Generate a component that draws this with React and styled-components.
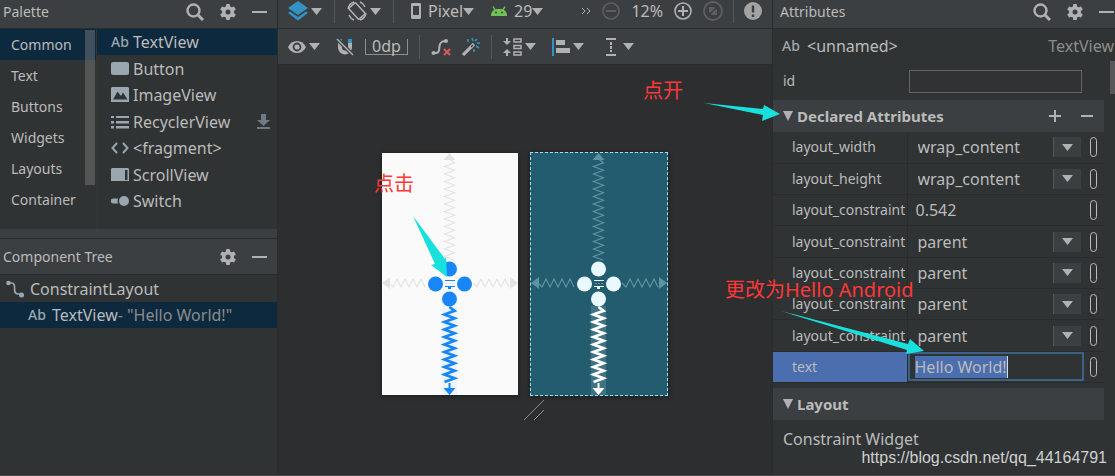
import { useState } from "react";
import styled, { createGlobalStyle, css } from "styled-components";

const v = {
  bg: "#303334",
  bar: "#3c3f41",
  canvas: "#2d2e30",
  line: "#292b2c",
  selected: "#0d293e",
  text: "#bbbbbb",
  icon: "#afb1b3",
  steel: "#9aa7b0",
  off: "#5c5e60",
  blue: "#3592c4",
  note: "#ff3838",
  arrow: "#18e0dc",
};

const categories = ["Common", "Text", "Buttons", "Widgets", "Layouts", "Container"];

const widgets = [
  { name: "TextView", icon: "ab" },
  { name: "Button", icon: "button" },
  { name: "ImageView", icon: "image" },
  { name: "RecyclerView", icon: "list", download: true },
  { name: "<fragment>", icon: "code" },
  { name: "ScrollView", icon: "scroll" },
  { name: "Switch", icon: "switch" },
];

const attributes = [
  { name: "layout_width", value: "wrap_content", options: ["wrap_content", "match_parent"] },
  { name: "layout_height", value: "wrap_content", options: ["wrap_content", "match_parent"] },
  { name: "layout_constraint", value: "0.542" },
  { name: "layout_constraint", value: "parent", options: ["parent"] },
  { name: "layout_constraint", value: "parent", options: ["parent"] },
  { name: "layout_constraint", value: "parent", options: ["parent"] },
  { name: "layout_constraint", value: "parent", options: ["parent"] },
];

// icons

const SearchIcon = () => (
  <svg width="18" height="18" viewBox="0 0 18 18" fill="none" stroke={v.icon}>
    <circle cx="7.5" cy="7.5" r="6" strokeWidth="2.4" />
    <path d="M12 12l5 5" strokeWidth="3" />
  </svg>
);

const GearIcon = () => (
  <svg width="16" height="16" viewBox="0 0 16 16" fill={v.icon}>
    {[0, 60, 120].map((a) => (
      <rect key={a} x="6" y="0" width="4" height="16" rx="1" transform={`rotate(${a} 8 8)`} />
    ))}
    <circle cx="8" cy="8" r="6" />
    <circle cx="8" cy="8" r="2.5" fill={v.bar} />
  </svg>
);

const MinusIcon = () => (
  <svg width="16" height="16" viewBox="0 0 16 16">
    <path d="M0 8h15" stroke={v.icon} strokeWidth="2" />
  </svg>
);

const Caret = () => (
  <svg width="11" height="7" viewBox="0 0 11 7">
    <path d="M0 0h11L5.5 7z" fill={v.icon} />
  </svg>
);

const WidgetIcon = ({ name }) => (
  <svg width="18" height="16" viewBox="0 0 18 16" fill={v.steel}>
    {name === "button" && <rect y="1" width="18" height="13" rx="2" />}
    {name === "image" && (
      <path fillRule="evenodd" d="M1 0h16l1 1v14H0V1zM2 12.500h14.500l-4.500-7-2 3.500-3.500-4.500z" />
    )}
    {name === "list" && (
      <path d="M0 2h3v2H0zM5 2h13v2H5zM0 7h3v2.500H0zM5 7h13v2.500H5zM0 12h3v2.500H0zM5 12h13v2.500H5z" />
    )}
    {name === "code" && (
      <path d="M6 3L1.500 8 6 13M12 3l4.500 5-4.500 5" fill="none" stroke={v.steel} strokeWidth="2" />
    )}
    {name === "scroll" && (
      <path fillRule="evenodd" d="M1 1h16l1 1v12H0V2zM14 3v10h2.500V3z" />
    )}
    {name === "switch" && (
      <>
        <path d="M2 5.500h5a7 7 0 000 5H2l-2-1v-3z" />
        <circle cx="13" cy="8" r="5" />
      </>
    )}
  </svg>
);

const DownloadIcon = () => (
  <svg width="13" height="16" viewBox="0 0 13 16" fill="#6e7a84">
    <path d="M4 0h5v6h4L6.500 12 0 6h4zM0 13h13v2H0z" />
  </svg>
);

const ConstraintIcon = () => (
  <svg width="18" height="18" viewBox="0 0 18 18" fill="none" stroke={v.steel} strokeWidth="1.600">
    <path d="M3 3h2.500c3 0 3 2 3 5s0 6 3.500 6h4" />
    <circle cx="2.500" cy="3" r="2.300" fill={v.steel} stroke="none" />
    <circle cx="15.500" cy="15" r="2.500" fill={v.steel} stroke="none" />
  </svg>
);

const LayersIcon = () => (
  <svg width="20" height="20" viewBox="0 0 20 20">
    <path d="M10 0l10 7-10 7L0 7z" fill={v.blue} />
    <path d="M0 12l2-1.500 8 5.500 8-5.500 2 1.500-10 7.500z" fill={v.blue} />
  </svg>
);

const RotateIcon = () => (
  <svg width="20" height="20" viewBox="0 0 20 20" fill="none" stroke={v.icon} strokeWidth="1.500">
    <rect x="5.500" y="2.500" width="9" height="15" rx="1" transform="rotate(-42 10 10)" />
    <path d="M1 8a9 9 0 016-7M13 1a9 9 0 015 5M19 12a9 9 0 01-6 7M7 19a9 9 0 01-5-5" />
  </svg>
);

const PhoneIcon = () => (
  <svg width="10" height="16" viewBox="0 0 10 16">
    <path fillRule="evenodd" fill={v.icon} d="M1 0h8l1 1v14l-1 1H1l-1-1V1zM2 3v9h6V3z" />
  </svg>
);

const AndroidIcon = () => (
  <svg width="16" height="10" viewBox="0 0 16 10">
    <path d="M0 10c0-4 2-6 5-7h6c3 1 5 3 5 7z" fill="#70c255" />
    <path d="M4 4L2 .5M12 4L14 .5" stroke="#70c255" strokeWidth="1.500" />
    <circle cx="5" cy="6.500" r="1" fill={v.bar} />
    <circle cx="11" cy="6.500" r="1" fill={v.bar} />
  </svg>
);

const ChevronsIcon = () => (
  <svg width="10" height="8" viewBox="0 0 10 8" fill="none" stroke={v.icon}>
    <path d="M1 1l3 3-3 3M6 1l3 3-3 3" />
  </svg>
);

const ZoomIcon = ({ kind }) => {
  const color = kind === "in" ? v.icon : v.off;
  return (
    <svg width="20" height="20" viewBox="0 0 20 20" fill="none" stroke={color} strokeWidth="2">
      <circle cx="10" cy="10" r={kind === "fit" ? 9 : 8} strokeWidth={kind === "fit" ? 2 : 1.6} />
      {kind !== "fit" && <path d="M5 10h10" />}
      {kind === "in" && <path d="M10 5v10" />}
      {kind === "fit" && <path d="M6 6h5l3 3v5H9l-3-3zM8 7l5 6" fill={color} stroke="none" />}
      {kind === "fit" && <path d="M6 14l8-8" stroke={v.bar} strokeWidth="1.200" />}
    </svg>
  );
};

const WarnIcon = () => (
  <svg width="18" height="18" viewBox="0 0 18 18">
    <circle cx="9" cy="9" r="9" fill="#a3a3a3" />
    <path d="M9 3.500v7M9 12.500v2.500" stroke={v.bar} strokeWidth="2.400" />
  </svg>
);

const EyeIcon = () => (
  <svg width="18" height="14" viewBox="0 0 18 14">
    <path d="M0 7c2-4 5-6 9-6s7 2 9 6c-2 4-5 6-9 6s-7-2-9-6z" fill={v.icon} />
    <circle cx="9" cy="7" r="3.500" fill="none" stroke={v.bar} strokeWidth="1.800" />
  </svg>
);

const MagnetIcon = () => (
  <svg width="18" height="18" viewBox="0 0 18 18" fill="none" strokeWidth="4">
    <path d="M4 5v4.500a5 5 0 0010 0V5" stroke={v.icon} />
    <path d="M4 1v4M14 1v4" stroke={v.blue} />
    <path d="M0 0l18 18" stroke={v.bar} strokeWidth="4" />
    <path d="M1 1l16 16" stroke={v.icon} strokeWidth="1.500" />
  </svg>
);

const ClearIcon = () => (
  <svg width="20" height="18" viewBox="0 0 20 18" fill="none" strokeWidth="2">
    <path d="M2 15h3c4 0 3-4 3.500-7S10 3 15 3" stroke={v.icon} />
    <circle cx="2.500" cy="15" r="2" fill={v.icon} />
    <circle cx="15" cy="3" r="2" fill={v.icon} />
    <path d="M13 11l6 6M19 11l-6 6" stroke="#db5860" />
  </svg>
);

const WandIcon = () => (
  <svg width="18" height="18" viewBox="0 0 18 18" fill="none">
    <path d="M1 17L12 6" stroke={v.icon} strokeWidth="3.200" />
    <path d="M9 9l2-2" stroke={v.bar} strokeWidth="1.200" />
    <path
      d="M6 1v3M10 0l1 3M15 1l-2 2M15 5h3M14 8l3 2M12 11v3"
      stroke={v.blue}
      strokeWidth="1.600"
    />
  </svg>
);

const PackIcon = () => (
  <svg width="19" height="18" viewBox="0 0 19 18" fill="none" stroke={v.icon}>
    <path d="M4 0v4M4 18v-4" strokeWidth="2" />
    <path d="M0 3h8l-4 4zM0 15h8l-4-4z" fill={v.icon} stroke="none" />
    <path d="M11 1h7v3h-7zM11 7.500h7v3h-7zM11 14h7v3h-7z" strokeWidth="1.500" />
  </svg>
);

const AlignIcon = () => (
  <svg width="18" height="18" viewBox="0 0 18 18" fill={v.icon}>
    <path d="M0 0h2v18H0z" fill={v.blue} />
    <path d="M4 2h9v5H4zM4 10h14v5H4z" />
  </svg>
);

const GuideIcon = () => (
  <svg width="20" height="18" viewBox="-6 0 20 18" stroke={v.icon} strokeWidth="2">
    <path d="M0 1h10M0 17h10" />
    <path d="M5 4v10" strokeDasharray="3 1" />
  </svg>
);

// zig-zag that runs down (or right) from a start point
const spring = (x, y, length, step, amp, vertical) => {
  const pts = [`${x},${y}`];
  for (let i = 1; i * step <= length; i++) {
    const side = i % 2 ? amp : -amp;
    pts.push(vertical ? `${x + side},${y + i * step}` : `${x + i * step},${y + side}`);
  }
  return pts.join(" ");
};

const Springs = ({ muted, strong, active, glow }) => (
  <svg width="136" height="242" viewBox="0 0 136 242" fill="none">
    <rect x="60" y="153" width="15" height="89" fill={glow} />
    <g stroke={muted} strokeWidth="1.200">
      <polyline points={spring(67.5, 6, 102, 3.75, 5, true)} />
      <polyline points={spring(7, 130, 38, 4, 4, false)} />
      <polyline points={spring(91, 130, 38, 4, 4, false)} />
    </g>
    <path d="M67.500 0l6 7h-12zM0 130l8-6v12zM136 130l-8-6v12z" fill={muted} />
    <polyline points={spring(67.5, 154, 76, 3.75, 5, true)} stroke={active} strokeWidth="2.800" />
    <path d="M67.500 242l-6-7h5v-5h2v5h5z" fill={active} />
    <g fill={strong}>
      <circle cx="67.500" cy="116" r="7.500" />
      <circle cx="53.500" cy="131" r="7.500" />
      <circle cx="82.500" cy="131" r="7.500" />
      <circle cx="67.500" cy="146" r="7.500" />
      <path d="M63 127h10v1H63zM63 133h10v1h-4v2h-3v-2h-3z" />
    </g>
    <path d="M64 130.500h8" stroke={muted} strokeDasharray="2 1" />
  </svg>
);

const Ab = () => <AbMark aria-hidden="true">Ab</AbMark>;

export default function App() {
  const [category, setCategory] = useState("Common");
  const [widget, setWidget] = useState("TextView");
  const [text, setText] = useState("Hello World!");

  return (
    <>
      <GlobalStyle />
      <Page>
        <Sidebar>
          <PanelHeader>
            <h2>Palette</h2>
            <IconButton aria-label="Search palette"><SearchIcon /></IconButton>
            <IconButton aria-label="Palette settings"><GearIcon /></IconButton>
            <IconButton aria-label="Hide palette"><MinusIcon /></IconButton>
          </PanelHeader>
          <Palette>
            <Categories>
              {categories.map((name) => (
                <Category key={name} $active={name === category} onClick={() => setCategory(name)}>
                  {name}
                </Category>
              ))}
              <Thumb />
            </Categories>
            <WidgetList>
              {widgets.map((w) => (
                <WidgetRow key={w.name} $active={w.name === widget} onClick={() => setWidget(w.name)}>
                  {w.icon === "ab" ? <Ab /> : <WidgetIcon name={w.icon} />}
                  <span>{w.name}</span>
                  {w.download && <DownloadIcon />}
                </WidgetRow>
              ))}
            </WidgetList>
          </Palette>
          <Splitter />
          <PanelHeader $tall>
            <h2>Component Tree</h2>
            <IconButton aria-label="Tree settings"><GearIcon /></IconButton>
            <IconButton aria-label="Hide tree"><MinusIcon /></IconButton>
          </PanelHeader>
          <TreeRow>
            <ConstraintIcon />
            <span>ConstraintLayout</span>
          </TreeRow>
          <TreeRow $child>
            <Ab />
            <span>TextView<em>- "Hello World!"</em></span>
          </TreeRow>
        </Sidebar>

        <Editor>
          <Toolbar>
            <ToolButton aria-label="Design surface"><LayersIcon /><Caret /></ToolButton>
            <Separator />
            <ToolButton aria-label="Orientation"><RotateIcon /><Caret /></ToolButton>
            <Separator />
            <ToolButton $device><PhoneIcon /><span>Pixel</span><Caret /></ToolButton>
            <ToolButton $device><AndroidIcon /><span>29</span><Caret /></ToolButton>
            <ZoomGroup>
              <ToolButton aria-label="More"><ChevronsIcon /></ToolButton>
              <ToolButton aria-label="Zoom out"><ZoomIcon kind="out" /></ToolButton>
              <span>12%</span>
              <ToolButton aria-label="Zoom in"><ZoomIcon kind="in" /></ToolButton>
              <ToolButton aria-label="Zoom to fit"><ZoomIcon kind="fit" /></ToolButton>
              <Separator />
              <ToolButton aria-label="Issues"><WarnIcon /></ToolButton>
            </ZoomGroup>
          </Toolbar>
          <Toolbar $second>
            <ToolButton $menu aria-label="View options"><EyeIcon /><Caret /></ToolButton>
            <ToolButton aria-label="Autoconnect"><MagnetIcon /></ToolButton>
            <Margin>0dp</Margin>
            <Separator />
            <ToolButton aria-label="Clear constraints"><ClearIcon /></ToolButton>
            <ToolButton aria-label="Infer constraints"><WandIcon /></ToolButton>
            <Separator />
            <ToolButton $menu aria-label="Pack"><PackIcon /><Caret /></ToolButton>
            <ToolButton $menu aria-label="Align"><AlignIcon /><Caret /></ToolButton>
            <ToolButton $menu aria-label="Guidelines"><GuideIcon /><Caret /></ToolButton>
          </Toolbar>
          <Canvas>
            <Screens>
              <Screen>
                <Springs muted="#e3e3e3" strong="#1886f7" active="#1886f7" glow="#edf4fb" />
                <ClickNote>
                  点击
                  <svg width="40" height="64" viewBox="0 0 40 64">
                    <path d="M1 1l32 43 1-2 1 20-16-12 4-1z" fill={v.arrow} />
                  </svg>
                </ClickNote>
              </Screen>
              <Screen $blueprint>
                <Springs muted="#5f93a2" strong="#e9f9ff" active="#ffffff" glow="#3f7282" />
              </Screen>
            </Screens>
            <svg width="22" height="22" viewBox="0 0 22 22" stroke="#8b8b8b">
              <path d="M1 21L21 1M11 21l10-10" />
            </svg>
          </Canvas>
        </Editor>

        <Inspector>
          <PanelHeader>
            <h2>Attributes</h2>
            <IconButton aria-label="Search attributes"><SearchIcon /></IconButton>
            <IconButton aria-label="Attribute settings"><GearIcon /></IconButton>
            <IconButton aria-label="Hide attributes"><MinusIcon /></IconButton>
          </PanelHeader>
          <Identity>
            <Ab />
            <span>&lt;unnamed&gt;</span>
            <em>TextView</em>
          </Identity>
          <Scroller>
            <IdRow>
              <label htmlFor="id">id</label>
              <input id="id" type="text" />
            </IdRow>
            <SectionHeader>
              <SectionToggle><Triangle />Declared Attributes</SectionToggle>
              <IconButton aria-label="Add attribute">
                <svg width="12" height="12" viewBox="0 0 12 12">
                  <path d="M0 6h12M6 0v12" stroke={v.icon} strokeWidth="2" />
                </svg>
              </IconButton>
              <IconButton aria-label="Remove attribute">
                <svg width="12" height="12" viewBox="0 0 12 12">
                  <path d="M0 6h12" stroke={v.icon} strokeWidth="2" />
                </svg>
              </IconButton>
            </SectionHeader>
            <AttributeTable>
              <tbody>
                {attributes.map((a, i) => (
                  <tr key={i}>
                    <th scope="row"><label htmlFor={`attr${i}`}>{a.name}</label></th>
                    <td>
                      {a.options ? (
                        <Dropdown>
                          <select id={`attr${i}`} defaultValue={a.value}>
                            {a.options.map((o) => <option key={o}>{o}</option>)}
                          </select>
                          <ArrowBox><Caret /></ArrowBox>
                        </Dropdown>
                      ) : (
                        <ValueInput id={`attr${i}`} defaultValue={a.value} />
                      )}
                    </td>
                    <td><Pill aria-label={`Pick ${a.name}`} /></td>
                  </tr>
                ))}
                <SelectedRow>
                  <th scope="row"><label htmlFor="attrText">text</label></th>
                  <td>
                    <TextEdit>
                      <input
                        id="attrText"
                        size={text.length}
                        value={text}
                        onChange={(e) => setText(e.target.value)}
                      />
                    </TextEdit>
                  </td>
                  <td><Pill aria-label="Pick text" /></td>
                </SelectedRow>
              </tbody>
            </AttributeTable>
            <SectionHeader>
              <SectionToggle><Triangle />Layout</SectionToggle>
            </SectionHeader>
            <Constraint>Constraint Widget</Constraint>
          </Scroller>
          <ScrollThumb />
          <OpenNote>
            点开
            <svg width="78" height="20" viewBox="0 0 78 20">
              <path d="M1 1l59 6 1-4 16 9-18 7 1-6z" fill={v.arrow} />
            </svg>
          </OpenNote>
          <ChangeNote>
            更改为Hello Android
            <svg width="146" height="48" viewBox="0 0 146 48">
              <path d="M1 1l127 33 2-5 14 12-18 3 1-4z" fill={v.arrow} />
            </svg>
          </ChangeNote>
          <Watermark href="https://blog.csdn.net/qq_44164791">
            https://blog.csdn.net/qq_44164791
          </Watermark>
        </Inspector>
      </Page>
    </>
  );
}

const GlobalStyle = createGlobalStyle`
  * {
    box-sizing: border-box;
  }
  body {
    margin: 0;
    background: ${v.bg};
    color: ${v.text};
    font: 16px/20px "Noto Sans", "Noto Sans CJK SC", sans-serif;
  }
  button, input, select {
    margin: 0;
    padding: 0;
    border: 0;
    background: none;
    color: inherit;
    font: inherit;
    outline: none;
  }
  svg {
    display: block;
    flex: none;
  }
  em {
    font-style: normal;
    color: #8c8c8c;
  }
`;

const Page = styled.main`
  display: grid;
  grid-template-columns: 278px 1fr 343px;
  min-height: 100vh;
  overflow: hidden;
  border-bottom: 1px solid #4a4a4c;
`;

const Sidebar = styled.aside`
  border-right: 1px solid ${v.line};
`;

const PanelHeader = styled.header`
  display: flex;
  align-items: center;
  gap: 16px;
  height: ${(props) => (props.$tall ? 36 : 29)}px;
  padding: 0 9px ${(props) => (props.$tall ? 0 : 5)}px 3px;
  background: ${v.bar};
  border-bottom: 1px solid ${v.line};

  h2 {
    flex: 1;
    margin: 0;
    font-size: 14px;
    font-weight: 400;
  }
`;

const IconButton = styled.button`
  display: flex;
`;

const Palette = styled.div`
  display: grid;
  grid-template-columns: 97px 1fr;
`;

const Categories = styled.div`
  position: relative;
  padding-bottom: 14px;
  border-right: 1px solid #383431;
`;

const Category = styled.button`
  display: block;
  width: 100%;
  height: 31px;
  padding: 0 11px;
  text-align: left;
  font-size: 14px;
  background: ${(props) => (props.$active ? v.selected : "none")};
`;

const Thumb = styled.div`
  position: absolute;
  top: 1px;
  right: 1px;
  width: 10px;
  height: 155px;
  background: rgba(128, 128, 128, 0.45);
`;

const WidgetList = styled.div`
  display: flex;
  flex-direction: column;
  justify-content: space-between;
  padding-bottom: 15px;
`;

const WidgetRow = styled.button`
  display: flex;
  align-items: center;
  gap: 4px;
  width: 100%;
  height: 26px;
  padding: 0 7px 0 14px;
  text-align: left;
  background: ${(props) => (props.$active ? v.selected : "none")};

  span + svg {
    margin-left: auto;
  }
`;

const AbMark = styled.b`
  width: 18px;
  flex: none;
  font-size: 14px;
  font-weight: 500;
  color: ${v.steel};
`;

const Splitter = styled.div`
  height: 10px;
  background: ${v.bar};
  border-bottom: 1px solid ${v.line};
`;

const TreeRow = styled.div`
  display: flex;
  align-items: center;
  gap: 6px;
  height: ${(props) => (props.$child ? 26 : 27)}px;
  padding-left: ${(props) => (props.$child ? 28 : 6)}px;
  background: ${(props) => (props.$child ? v.selected : "none")};
`;

const Editor = styled.section`
  display: flex;
  flex-direction: column;
  min-width: 0;
`;

const Toolbar = styled.div`
  display: flex;
  align-items: center;
  gap: ${(props) => (props.$second ? 11 : 12)}px;
  height: ${(props) => (props.$second ? 36 : 29)}px;
  padding: 0 10px ${(props) => (props.$second ? 0 : 6)}px 10px;
  background: ${v.bar};
  border-bottom: 1px solid ${v.line};
`;

const ToolButton = styled.button`
  display: flex;
  align-items: center;
  gap: 3px;
  padding-right: ${(props) => (props.$menu ? 5 : 0)}px;

  ${(props) => props.$device && css`
    padding-left: 5px;

    span {
      margin-left: 4px;
      margin-right: -3px;
    }
  `}
`;

const Separator = styled.i`
  width: 1px;
  height: 24px;
  background: #55585a;
`;

const ZoomGroup = styled.div`
  display: flex;
  align-items: center;
  gap: 10px;
  margin-left: auto;
`;

const Margin = styled.button`
  width: 43px;
  height: 16px;
  border: solid #8c8e90;
  border-width: 0 1px 1px;
  line-height: 12px;
`;

const Canvas = styled.div`
  display: flex;
  flex: 1;
  flex-direction: column;
  align-items: center;
  gap: 3px;
  padding: 87px 0 32px;
  background: ${v.canvas};

  > svg {
    margin-left: 18px;
  }
`;

const Screens = styled.div`
  display: flex;
  align-items: center;
  gap: 12px;
`;

const Screen = styled.div`
  position: relative;
  background: #fafafa;
  box-shadow: 0 1px 5px rgba(0, 0, 0, 0.4);

  ${(props) => props.$blueprint && css`
    background: #235c6e;
    border: 1px dashed #9ce0ee;
  `}
`;

const note = css`
  position: absolute;
  z-index: 2;
  color: ${v.note};
  font-size: 20px;
  line-height: 24px;
  white-space: nowrap;
  pointer-events: none;

  svg {
    position: absolute;
  }
`;

const ClickNote = styled.div`
  ${note}
  top: 19px;
  left: -8px;

  svg {
    top: 43px;
    left: 38px;
  }
`;

const OpenNote = styled.div`
  ${note}
  top: 79px;
  left: -130px;

  svg {
    top: 23px;
    left: 60px;
  }
`;

const ChangeNote = styled.div`
  ${note}
  top: 278px;
  left: -48px;

  svg {
    top: 32px;
    left: 55px;
  }
`;

const Inspector = styled.aside`
  position: relative;
  border-left: 1px solid ${v.line};

  ${PanelHeader} {
    padding-left: 7px;
    padding-right: 0;
  }
`;

const Identity = styled.div`
  display: flex;
  align-items: center;
  gap: 7px;
  height: 34px;
  padding: 0 1px 0 9px;

  em {
    margin-left: auto;
  }
`;

const Scroller = styled.div`
  margin-right: 11px;
`;

const IdRow = styled.div`
  display: flex;
  align-items: center;
  justify-content: space-between;
  height: 37px;
  padding: 0 22px 1px 10px;
  font-size: 14px;

  input {
    width: 173px;
    height: 23px;
    padding: 0 5px;
    border: 1px solid #646464;
  }
`;

const SectionHeader = styled.div`
  display: flex;
  align-items: center;
  gap: 20px;
  height: 32px;
  padding: 0 11px 0 10px;
  background: ${v.bar};
`;

const SectionToggle = styled.button`
  display: flex;
  align-items: center;
  gap: 4px;
  margin-right: auto;
  font-size: 15px;
  font-weight: 700;
`;

const Triangle = styled.i`
  border: solid transparent;
  border-width: 10px 5px 0;
  border-top-color: ${v.icon};
`;

const AttributeTable = styled.table`
  width: 100%;
  height: 251px;
  margin-bottom: 5px;
  table-layout: fixed;
  border-collapse: collapse;

  th, td {
    height: 31px;
    padding: 0;
    border-bottom: 1px solid ${v.line};
  }
  th {
    width: 134px;
    padding-left: 19px;
    border-right: 1px solid ${v.line};
    font-size: 14px;
    font-weight: 400;
    text-align: left;
    white-space: nowrap;
  }
  td:last-child {
    width: 20px;
  }
`;

const Dropdown = styled.div`
  display: grid;
  align-items: center;
  margin-right: 3px;

  > * {
    grid-area: 1 / 1;
  }
  select {
    padding-left: 10px;
    appearance: none;
  }
`;

const ArrowBox = styled.span`
  display: flex;
  align-items: center;
  justify-content: center;
  justify-self: end;
  width: 28px;
  height: 20px;
  background: ${v.bar};
  border-left: 1px solid #55585a;
  pointer-events: none;
`;

const ValueInput = styled.input`
  width: 100%;
  padding-left: 8px;
`;

const Pill = styled.button`
  display: block;
  width: 7px;
  height: 20px;
  margin-left: 6px;
  border: 1px solid ${v.text};
  border-radius: 4px;
`;

const SelectedRow = styled.tr`
  th {
    background: #4b6eaf;
  }
`;

const TextEdit = styled.div`
  display: flex;
  align-items: center;
  height: 29px;
  padding: 0 5px;
  border: 2px solid #3d6185;

  input {
    height: 22px;
    field-sizing: content;
    background: #4b6eaf;
    border-right: 1px solid #dddddd;
  }
`;

const Constraint = styled.p`
  margin: 0;
  padding: 9px 10px 26px;
`;

const ScrollThumb = styled.div`
  position: absolute;
  top: 61px;
  right: 0;
  width: 5px;
  height: 33px;
  background: #555758;
`;

const Watermark = styled.a`
  position: absolute;
  right: 8px;
  bottom: 7px;
  color: #d0d0d0;
  font: 16px/20px "Liberation Sans", sans-serif;
  text-decoration: none;
`;
